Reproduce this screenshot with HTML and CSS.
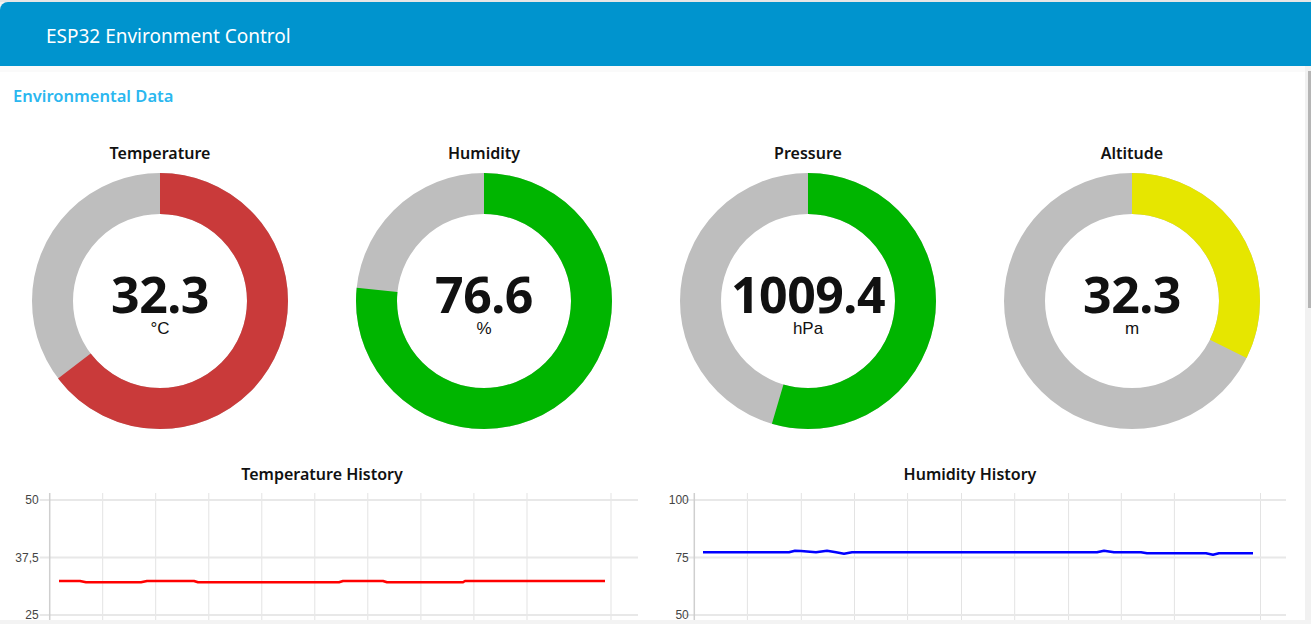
FILE: index.html
```html
<!DOCTYPE html>
<html lang="en">
<head>
<meta charset="utf-8">
<title>ESP32 Environment Control</title>
<link rel="stylesheet" href="styles.css">
</head>
<body>
<div class="app">
  <header class="topbar">
    <h1 class="topbar-title">ESP32 Environment Control</h1>
  </header>
  <div class="body-row">
    <main class="panel">
      <h2 class="section-title">Environmental Data</h2>

      <div class="gauges">
        <div class="gauge">
          <div class="gauge-title">Temperature</div>
          <div class="dial">
            <svg class="dial-svg" width="256" height="256" viewBox="0 0 256 256">
              <circle cx="128" cy="128" r="107.5" fill="none" stroke="#bebebe" stroke-width="41"/>
              <circle cx="128" cy="128" r="107.5" fill="none" stroke="#c93a3a" stroke-width="41" stroke-dasharray="436.3 1000" transform="rotate(-90 128 128)"/>
            </svg>
            <div class="readout">
              <div class="value">32.3</div>
              <div class="unit">°C</div>
            </div>
          </div>
        </div>
        <div class="gauge">
          <div class="gauge-title">Humidity</div>
          <div class="dial">
            <svg class="dial-svg" width="256" height="256" viewBox="0 0 256 256">
              <circle cx="128" cy="128" r="107.5" fill="none" stroke="#bebebe" stroke-width="41"/>
              <circle cx="128" cy="128" r="107.5" fill="none" stroke="#00b500" stroke-width="41" stroke-dasharray="517.4 1000" transform="rotate(-90 128 128)"/>
            </svg>
            <div class="readout">
              <div class="value">76.6</div>
              <div class="unit">%</div>
            </div>
          </div>
        </div>
        <div class="gauge">
          <div class="gauge-title">Pressure</div>
          <div class="dial">
            <svg class="dial-svg" width="256" height="256" viewBox="0 0 256 256">
              <circle cx="128" cy="128" r="107.5" fill="none" stroke="#bebebe" stroke-width="41"/>
              <circle cx="128" cy="128" r="107.5" fill="none" stroke="#00b500" stroke-width="41" stroke-dasharray="368.1 1000" transform="rotate(-90 128 128)"/>
            </svg>
            <div class="readout">
              <div class="value">1009.4</div>
              <div class="unit">hPa</div>
            </div>
          </div>
        </div>
        <div class="gauge">
          <div class="gauge-title">Altitude</div>
          <div class="dial">
            <svg class="dial-svg" width="256" height="256" viewBox="0 0 256 256">
              <circle cx="128" cy="128" r="107.5" fill="none" stroke="#bebebe" stroke-width="41"/>
              <circle cx="128" cy="128" r="107.5" fill="none" stroke="#e6e600" stroke-width="41" stroke-dasharray="218.2 1000" transform="rotate(-90 128 128)"/>
            </svg>
            <div class="readout">
              <div class="value">32.3</div>
              <div class="unit">m</div>
            </div>
          </div>
        </div>
      </div>

      <div class="charts">
        <div class="chart">
          <div class="chart-title">Temperature History</div>
          <svg class="chart-svg" width="632" height="140" viewBox="0 0 632 140">
            <g class="vgrid">
              <line x1="96.7" y1="3" x2="96.7" y2="140"/>
              <line x1="149.7" y1="3" x2="149.7" y2="140"/>
              <line x1="202.8" y1="3" x2="202.8" y2="140"/>
              <line x1="255.8" y1="3" x2="255.8" y2="140"/>
              <line x1="308.8" y1="3" x2="308.8" y2="140"/>
              <line x1="361.8" y1="3" x2="361.8" y2="140"/>
              <line x1="414.9" y1="3" x2="414.9" y2="140"/>
              <line x1="467.9" y1="3" x2="467.9" y2="140"/>
              <line x1="521" y1="3" x2="521" y2="140"/>
              <line x1="605" y1="3" x2="605" y2="140"/>
            </g>
            <g class="hgrid">
              <line x1="33.7" y1="10" x2="632" y2="10"/>
              <line x1="33.7" y1="67.5" x2="632" y2="67.5"/>
              <line x1="33.7" y1="125" x2="632" y2="125"/>
            </g>
            <line class="axis" x1="43.7" y1="3" x2="43.7" y2="140"/>
            <g class="ticks">
              <text x="32.7" y="14">50</text>
              <text x="32.7" y="71.5">37,5</text>
              <text x="32.7" y="129">25</text>
            </g>
            <polyline class="series-red" points="53,91 74,91 80,92.3 135,92.3 141,91 188,91 192,92.3 333,92.3 337,91 377,91 381,92.3 457,92.3 459,91 599,91"/>
          </svg>
        </div>
        <div class="chart">
          <div class="chart-title">Humidity History</div>
          <svg class="chart-svg" width="632" height="140" viewBox="0 0 632 140">
            <g class="vgrid">
              <line x1="93.4" y1="3" x2="93.4" y2="140"/>
              <line x1="147.3" y1="3" x2="147.3" y2="140"/>
              <line x1="200.5" y1="3" x2="200.5" y2="140"/>
              <line x1="253.6" y1="3" x2="253.6" y2="140"/>
              <line x1="307.5" y1="3" x2="307.5" y2="140"/>
              <line x1="360.7" y1="3" x2="360.7" y2="140"/>
              <line x1="414.6" y1="3" x2="414.6" y2="140"/>
              <line x1="467.3" y1="3" x2="467.3" y2="140"/>
              <line x1="520.4" y1="3" x2="520.4" y2="140"/>
              <line x1="606.5" y1="3" x2="606.5" y2="140"/>
            </g>
            <g class="hgrid">
              <line x1="30.3" y1="10" x2="632" y2="10"/>
              <line x1="30.3" y1="67.5" x2="632" y2="67.5"/>
              <line x1="30.3" y1="125" x2="632" y2="125"/>
            </g>
            <line class="axis" x1="40.3" y1="3" x2="40.3" y2="140"/>
            <g class="ticks">
              <text x="34.8" y="14">100</text>
              <text x="34.8" y="71.5">75</text>
              <text x="34.8" y="129">50</text>
            </g>
            <polyline class="series-blue" points="49,62.3 135,62.3 141,60.7 147,61 162,62.3 173,60.7 182,62.3 190,63.7 198,62.3 443,62.3 450,60.7 460,62.3 487,62.3 493,63.3 552,63.3 559,64.7 565,63.3 599,63.3"/>
          </svg>
        </div>
      </div>
    </main>
    <div class="scrollbar"><div class="scroll-thumb"></div></div>
  </div>
</div>
</body>
</html>
```

FILE: styles.css
```css
html, body {
  margin: 0;
  padding: 0;
}

body {
  width: 1311px;
  height: 624px;
  overflow: hidden;
  background: #f3f3f3;
  font-family: "Noto Sans", "Open Sans", sans-serif;
  color: #111;
}

.app {
  display: flex;
  flex-direction: column;
  height: 624px;
  padding-top: 2px;
  box-sizing: border-box;
  background: linear-gradient(#e6e6e6 0 2px, #f3f3f3 2px);
}

.topbar {
  height: 64px;
  flex: none;
  background: #0094ce;
  border-top-left-radius: 8px;
  display: flex;
  align-items: center;
  padding-left: 46px;
}

.topbar-title {
  margin: 0;
  font-size: 19px;
  font-weight: 400;
  color: #ffffff;
  line-height: 24px;
  padding-top: 4px;
}

.body-row {
  display: flex;
  height: 554px;
  background: #fafafa;
}

.panel {
  flex: 1;
  margin-top: 6px;
  height: 548px;
  background: #ffffff;
  overflow: hidden;
}

.scrollbar {
  width: 6px;
  flex: none;
  background: #f1f1f1;
  display: flex;
  justify-content: flex-end;
}

.scroll-thumb {
  width: 3px;
  height: 237px;
  margin-top: 5px;
  background: #b5b5b5;
}

.section-title {
  margin: 0;
  padding: 14px 13px 0;
  font-size: 16.5px;
  line-height: 20px;
  font-weight: 600;
  color: #2bb7ef;
}

.gauges {
  display: grid;
  grid-template-columns: repeat(4, 316px);
  column-gap: 8px;
  padding-left: 2px;
  margin-top: 37px;
}

.gauge {
  display: flex;
  flex-direction: column;
  align-items: center;
}

.gauge-title,
.chart-title {
  font-size: 16px;
  line-height: 20px;
  height: 20px;
  font-weight: 600;
  color: #111;
  text-align: center;
}

.dial {
  margin-top: 10px;
  display: grid;
  width: 256px;
  height: 256px;
}

.dial-svg {
  grid-area: 1 / 1;
  display: block;
}

.readout {
  grid-area: 1 / 1;
  display: flex;
  flex-direction: column;
  align-items: center;
  justify-content: center;
  padding-top: 4px;
}

.value {
  font-size: 50px;
  line-height: 50px;
  font-weight: 700;
  color: #111;
  letter-spacing: -0.5px;
}

.unit {
  font-family: "Liberation Sans", Arial, sans-serif;
  font-size: 17px;
  line-height: 18px;
  margin-top: 1px;
  color: #111;
}

.charts {
  display: grid;
  grid-template-columns: repeat(2, 632px);
  column-gap: 16px;
  padding-left: 6px;
  margin-top: 35px;
}

.chart {
  display: flex;
  flex-direction: column;
}

.chart-svg {
  display: block;
  margin-top: 6px;
}

.vgrid line {
  stroke: #e3e3e3;
  stroke-width: 1;
}

.hgrid line {
  stroke: #e8e8e8;
  stroke-width: 2;
}

.axis {
  stroke: #cfcfcf;
  stroke-width: 1.5;
}

.ticks text {
  font-family: "Liberation Sans", Arial, sans-serif;
  font-size: 12px;
  fill: #444;
  text-anchor: end;
}

.series-red {
  fill: none;
  stroke: #ff0000;
  stroke-width: 2.5;
  stroke-linejoin: round;
}

.series-blue {
  fill: none;
  stroke: #0000ff;
  stroke-width: 2.5;
  stroke-linejoin: round;
}
```
